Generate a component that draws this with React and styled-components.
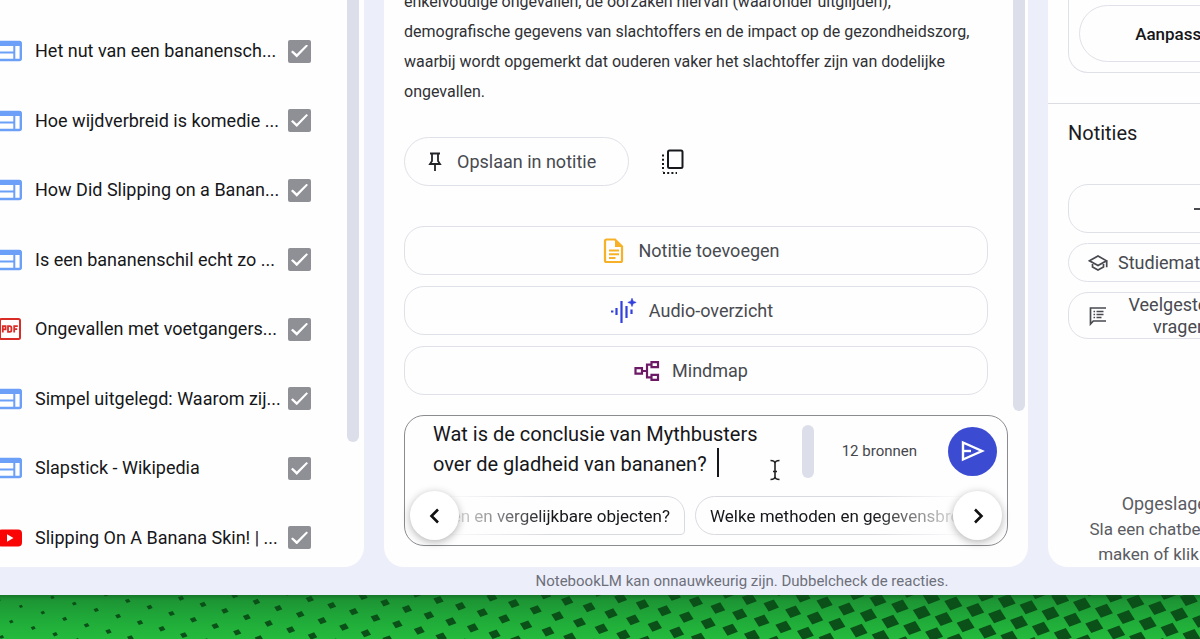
import React from "react";
import styled, { createGlobalStyle } from "styled-components";

const GlobalStyle = createGlobalStyle`
  *, *::before, *::after { box-sizing: border-box; }
  body { margin: 0; background: #1e9a35; font-family: Roboto, "Liberation Sans", sans-serif; color: #1b1c1f; }
  h2, p, ul { margin: 0; padding: 0; }
  button, textarea { font-family: inherit; }
`;

const Page = styled.div`
  min-height: 100vh;
  display: flex;
  flex-direction: column;
  overflow: hidden;
`;

/* The notebook window runs on past the right edge of the page. */
const NotebookWindow = styled.main`
  flex: 1;
  width: calc(100% + 284px);
  display: flex;
  flex-direction: column;
  background: #eceef9;
`;

const Panels = styled.div`
  flex: 1;
  display: grid;
  grid-template-columns: 364px minmax(0, 1fr) 436px;
  gap: 20px;
`;

const Panel = styled.section`
  display: flex;
  flex-direction: ${(p) => (p.$row ? "row" : "column")};
  min-width: 0;
  overflow: hidden;
  background: #fefefe;
  border-radius: 0 0 ${(p) => (p.$flushLeft ? "20px 0" : "20px 20px")};
`;

const ScrollThumb = styled.div`
  flex: none;
  width: 12px;
  height: ${(p) => p.$height};
  margin: 0 ${(p) => p.$inset} 0 0;
  background: #dcdfea;
  border-radius: ${(p) => (p.$round ? "6px" : "0 0 6px 6px")};
`;

/* ---------- sources ---------- */

const SourceList = styled.ul`
  flex: 1;
  display: flex;
  flex-direction: column;
  justify-content: space-between;
  list-style: none;
  padding: 39px 36px 17px 0;
`;

const SourceRow = styled.li`
  label {
    display: flex;
    align-items: center;
    height: 24px;
    font-size: 18px;
    line-height: 24px;
    white-space: nowrap;
    color: #16171a;
  }
  svg { flex: none; margin-left: -4px; }
`;

const SourceName = styled.span`
  flex: 1;
  padding-left: 9px;
`;

const Check = styled.input`
  appearance: none;
  flex: none;
  width: 23px;
  height: 23px;
  margin: 0;
  border-radius: 2px;
  display: grid;
  place-items: center;
  background: #8f9096;
  &::before {
    content: "";
    width: 17px;
    height: 13px;
    background: #fff;
    clip-path: polygon(0 57%, 10% 46%, 34% 74%, 91% 0, 100% 10%, 34% 100%);
  }
`;

/* ---------- chat ---------- */

const ChatScroll = styled.div`
  flex: 1;
  min-height: 0;
  display: flex;
  padding-left: 20px;
`;

const Thread = styled.div`
  flex: 1;
  height: 0;
  min-height: 100%;
  display: flex;
  flex-direction: column;
  justify-content: flex-end;
  padding: 0 25px 20px 0;
`;

const Answer = styled.p`
  font-size: 16px;
  line-height: 30px;
  color: #303135;
  margin-bottom: 30px;
  white-space: nowrap;
`;

const AnswerActions = styled.div`
  display: flex;
  align-items: center;
  gap: 26px;
  margin-bottom: 40px;
`;

const OutlineButton = styled.button`
  display: flex;
  align-items: center;
  justify-content: center;
  gap: ${(p) => p.$gap || "12px"};
  height: ${(p) => p.$height || "49px"};
  padding: 0 ${(p) => p.$pad || "20px"};
  flex: ${(p) => (p.$grow ? "1 1 0" : "none")};
  min-width: 0;
  border: 1px solid #e0e1e8;
  border-radius: ${(p) => p.$radius || "20px"};
  background: transparent;
  color: ${(p) => (p.$dark ? "#16171a" : "#484a50")};
  font-size: ${(p) => p.$size || "18px"};
  line-height: 22px;
  font-weight: ${(p) => (p.$dark ? 500 : 450)};
  white-space: nowrap;
  svg { flex: none; }
`;

const IconButton = styled.button`
  width: 36px;
  height: 36px;
  padding: 0;
  display: grid;
  place-items: center;
  border: 0;
  background: none;
`;

const Suggestions = styled.div`
  display: grid;
  gap: 11px;
`;

const Composer = styled.form`
  position: relative;
  margin: 0 20px 21px;
  border: 1px solid #8b8c90;
  border-radius: 20px;
`;

const ComposerTop = styled.div`
  display: flex;
  align-items: center;
  margin-bottom: 6px;
  padding: 0 10px 0 28px;
  height: 70px;
`;

const PromptWrap = styled.div`
  position: relative;
  flex: 1;
  align-self: stretch;
  padding-top: 3px;
`;

const Prompt = styled.textarea`
  display: block;
  width: 100%;
  height: 60px;
  padding: 0;
  border: 0;
  outline: 0;
  resize: none;
  overflow: hidden;
  background: transparent;
  color: #16171a;
  font-size: 20px;
  line-height: 30px;
`;

const Caret = styled.span`
  position: absolute;
  left: 284px;
  top: 32px;
  width: 2px;
  height: 29px;
  background: #16171a;
`;

const TextPointer = styled.svg`
  position: absolute;
  left: 336px;
  top: 43px;
`;

const SourceCount = styled.span`
  padding: 0 31px 0 28px;
  font-size: 15px;
  line-height: 20px;
  color: #45474c;
`;

const SendButton = styled.button`
  width: 49px;
  height: 49px;
  padding: 0;
  display: grid;
  place-items: center;
  border: 0;
  border-radius: 50%;
  background: #3b4bd2;
`;

const ChipRow = styled.div`
  display: flex;
  gap: 10px;
  padding: 4px 0 10px;
  margin: 0 5px;
  mask-image: linear-gradient(to right, transparent 30px, #000 140px, #000 calc(100% - 130px), transparent calc(100% - 35px));
`;

const ChipSlot = styled.div`
  display: flex;
  min-width: 0;
  overflow: hidden;
  ${(p) => (p.$end ? "width: 275px; justify-content: flex-end;" : "flex: 1;")}
`;

const Chip = styled.button`
  flex: none;
  height: 39px;
  padding: 0 14px;
  border: 1px solid #d9dae0;
  border-radius: ${(p) => (p.$tail ? "18px 18px 4px 18px" : "20px")};
  background: transparent;
  color: #16171a;
  font-size: 17px;
  line-height: 24px;
  white-space: nowrap;
`;

const RoundArrow = styled.button`
  position: absolute;
  bottom: 5px;
  ${(p) => p.$side}: 5px;
  width: 49px;
  height: 49px;
  padding: 0;
  display: grid;
  place-items: center;
  border: 0;
  border-radius: 50%;
  background: #fff;
  box-shadow: 0 2px 8px rgba(0, 0, 0, 0.3);
`;

const Disclaimer = styled.footer`
  height: 28px;
  font-size: 15px;
  line-height: 28px;
  text-align: center;
  color: #6d707b;
`;

/* ---------- studio ---------- */

const StudioCard = styled.div`
  display: flex;
  gap: 10px;
  margin: 0 20px 30px;
  padding: 5px 10px 10px;
  border: 1px solid #e0e1e8;
  border-top: 0;
  border-radius: 0 0 20px 20px;
`;

const NotesSection = styled.div`
  flex: 1;
  display: flex;
  flex-direction: column;
  gap: 10px;
  padding: 0 20px;
  border-top: 1px solid #dcdde3;
`;

const NotesTitle = styled.h2`
  padding: 14px 0 26px;
  font-size: 20px;
  line-height: 30px;
  font-weight: 400;
`;

const ButtonRow = styled.div`
  display: flex;
  gap: 10px;
`;

const ButtonText = styled.span`
  flex: ${(p) => (p.$grow ? 1 : "none")};
`;

const EmptyNote = styled.div`
  margin-top: auto;
  padding-left: 4px;
  text-align: center;
  white-space: nowrap;
  font-size: 17px;
  line-height: 25px;
  color: #5a5c62;
  strong { font-size: 18px; font-weight: 450; }
`;

/* ---------- backdrop ---------- */

const Backdrop = styled.div`
  height: 44px;
  background: linear-gradient(to bottom, #15772a 0, #1d9434 5px, #1fa638 20px, #24bb3d 44px);
  svg { display: block; }
`;

const cells = [];
for (let j = -34; j <= 14; j++) {
  for (let i = -24; i <= 44; i++) {
    const x = 407 + i * 21.9 - j * 9.6;
    const y = 14 + i * 6.3 + j * 15.3;
    if (x > -8 && x < 1210 && y > -8 && y < 52) cells.push([x, y]);
  }
}

function Pattern() {
  return (
    <svg width="1210" height="44" fill="#0b5018" aria-hidden="true">
      {cells.map(([x, y]) => {
        const s = Math.min(1, 0.2 + (x / 900) * 0.75 + y / 600);
        return (
          <path
            key={`${x},${y}`}
            transform={`translate(${x} ${y}) scale(${s})`}
            d="M-9 -2.500 L3 -7 L9 2.500 L-3 7Z"
          />
        );
      })}
    </svg>
  );
}

/* ---------- icons ---------- */

const WebIcon = () => (
  <svg width="30" height="24" viewBox="0 0 30 24" fill="none">
    <rect x="2" y="3" width="22.800" height="18" rx="1.500" stroke="#6b9ff8" strokeWidth="2.400" />
    <path d="M2 13.500h16M18.300 7v13" stroke="#6b9ff8" strokeWidth="2" />
    <path d="M2 4.500h23" stroke="#6b9ff8" strokeWidth="5" />
  </svg>
);

const PdfIcon = () => (
  <svg width="30" height="24" viewBox="0 0 30 24" fill="none" stroke="#da2c27">
    <rect x="4" y="2" width="20" height="20" rx="1.5" strokeWidth="2" />
    <path d="M6.8 15.5V9.2h2.8v3.2H6.8M12 9.2h1.8q1.6 0 1.6 1.6v2.5q0 1.6-1.6 1.6H12zM18.2 15.5V9.2h3.6M18.2 12.2h3" strokeWidth="1.8" />
  </svg>
);

const VideoIcon = () => (
  <svg width="30" height="24" viewBox="0 0 30 24">
    <rect x="2" y="3.5" width="24" height="17" rx="4" fill="#f90505" />
    <path d="M11 8.2v7.6l6.5-3.8z" fill="#fff" />
  </svg>
);

const PinIcon = () => (
  <svg width="20" height="24" viewBox="0 0 20 24" fill="none" stroke="#242529" strokeWidth="1.8">
    <path d="M5 3.5h10M7 3.5v7.5l-2 3h10l-2-3V3.5M10 14v7" />
  </svg>
);

const CopyIcon = () => (
  <svg width="24" height="26" viewBox="0 0 24 26" fill="none" stroke="#17181b">
    <rect x="7" y="1.5" width="14.5" height="17.5" rx="1.5" strokeWidth="2" />
    <path d="M2 5.500v17M2 24h14" strokeWidth="2" strokeDasharray="2 2.200" />
  </svg>
);

const NoteIcon = () => (
  <svg width="24" height="28" viewBox="0 0 24 28" fill="none" stroke="#f6b127">
    <path d="M4.500 2.500h8.500l7 7v14q0 1.500-1.500 1.500h-14Q3 25 3 23.500V4q0-1.500 1.500-1.500z" strokeWidth="2.200" />
    <path d="M13 2v8h8z" fill="#f6b127" stroke="none" />
    <path d="M7 13.500h10M7 17.300h10M7 21h6.500" strokeWidth="1.900" />
  </svg>
);

const AudioIcon = () => (
  <svg width="28" height="28" viewBox="0 0 28 28" fill="none" stroke="#3240dc">
    <path d="M2 14.500h2.400M7.500 11v7M12.500 4v22M17.500 9v12M22.500 12.500v4.500" strokeWidth="2.200" />
    <path d="M23 1.200l1.200 3 3 1.200-3 1.200-1.200 3-1.200-3-3-1.200 3-1.200z" fill="#3240dc" strokeWidth=".6" />
  </svg>
);

const MindmapIcon = () => (
  <svg width="26" height="24" viewBox="0 0 26 24" fill="none" stroke="#6d1a66" strokeWidth="2.200">
    <path d="M1.500 9.200h6.500v5.500H1.500zM17.500 3.200h6.500v5h-6.500zM17.500 15.800h6.500v5h-6.500zM8 12h5M17.500 5.700h-4.500v12.600h4.500" />
  </svg>
);

const SendIcon = () => (
  <svg width="28" height="28" viewBox="0 0 28 28" fill="none" stroke="#fff" strokeWidth="2.400">
    <path d="M4 5.500v17L23 14z" strokeLinejoin="miter" />
    <path d="M4 14h8" />
  </svg>
);

const Chevron = ({ left }) => (
  <svg width="20" height="20" viewBox="0 0 20 20" fill="none" stroke="#111" strokeWidth="2.600">
    <path d={left ? "M13 3.500L6.500 10l6.500 6.500" : "M7 3.500l6.500 6.500L7 16.500"} />
  </svg>
);

const PlusIcon = () => (
  <svg width="16" height="16" viewBox="0 0 16 16" stroke="#484a50" strokeWidth="2">
    <path d="M8 1v14M1 8h14" />
  </svg>
);

const CapIcon = () => (
  <svg width="20" height="20" viewBox="0 0 20 20" fill="none" stroke="#484a50" strokeWidth="1.700">
    <path d="M1.500 7.800L10 3l8.500 4.800L10 12.500zM4.500 9.800v4.200L10 17l5.500-3v-4.200M18.700 7.800v6.500" />
  </svg>
);

const FaqIcon = () => (
  <svg width="18" height="20" viewBox="0 0 18 20" fill="none" stroke="#484a50" strokeWidth="1.700">
    <path d="M17 2H1.500v16l2.800-3H17" />
    <path d="M4.500 5.500h1.600M4.500 8.500h1.600M4.500 11.500h1.600M7.500 5.500h7M7.500 8.500h7M7.500 11.500h5" />
  </svg>
);

const sources = [
  [WebIcon, "Het nut van een bananensch..."],
  [WebIcon, "Hoe wijdverbreid is komedie ..."],
  [WebIcon, "How Did Slipping on a Banan..."],
  [WebIcon, "Is een bananenschil echt zo ..."],
  [PdfIcon, "Ongevallen met voetgangers..."],
  [WebIcon, "Simpel uitgelegd: Waarom zij..."],
  [WebIcon, "Slapstick - Wikipedia"],
  [VideoIcon, "Slipping On A Banana Skin! | ..."],
];

function SourcesPanel() {
  return (
    <Panel $row $flushLeft aria-label="Bronnen">
      <SourceList>
        {sources.map(([Icon, name]) => (
          <SourceRow key={name}>
            <label>
              <Icon />
              <SourceName>{name}</SourceName>
              <Check type="checkbox" defaultChecked />
            </label>
          </SourceRow>
        ))}
      </SourceList>
      <ScrollThumb $height="78%" $inset="5px" />
    </Panel>
  );
}

function ChatPanel() {
  return (
    <Panel aria-label="Chat">
      <ChatScroll>
        <Thread>
          <Answer>
            enkelvoudige ongevallen, de oorzaken hiervan (waaronder uitglijden),<br />
            demografische gegevens van slachtoffers en de impact op de gezondheidszorg,<br />
            waarbij wordt opgemerkt dat ouderen vaker het slachtoffer zijn van dodelijke<br />
            ongevallen.
          </Answer>
          <AnswerActions>
            <OutlineButton $radius="25px" $pad="32px 0 20px">
              <PinIcon />
              Opslaan in notitie
            </OutlineButton>
            <IconButton aria-label="Kopiëren"><CopyIcon /></IconButton>
          </AnswerActions>
          <Suggestions>
            <OutlineButton $pad="30px 0 20px"><NoteIcon />Notitie toevoegen</OutlineButton>
            <OutlineButton $pad="30px 0 20px"><AudioIcon />Audio-overzicht</OutlineButton>
            <OutlineButton $pad="30px 0 20px"><MindmapIcon />Mindmap</OutlineButton>
          </Suggestions>
        </Thread>
        <ScrollThumb $height="calc(100% - 4px)" $inset="3px" />
      </ChatScroll>
      <Composer onSubmit={(e) => e.preventDefault()}>
        <ComposerTop>
          <PromptWrap>
            <Prompt
              aria-label="Vraag"
              defaultValue={"Wat is de conclusie van Mythbusters\nover de gladheid van bananen?"}
            />
            <Caret />
            <TextPointer width="12" height="22" viewBox="0 0 12 22" fill="none" stroke="#222" strokeWidth="1.600">
              <path d="M1.500 1.500Q6 1.500 6 4.500Q6 1.500 10.500 1.500M6 4v14M1.500 20.500Q6 20.500 6 17.500Q6 20.500 10.500 20.500M4 12.500h4" />
            </TextPointer>
          </PromptWrap>
          <ScrollThumb $height="53px" $inset="0px" $round />
          <SourceCount>12 bronnen</SourceCount>
          <SendButton aria-label="Versturen"><SendIcon /></SendButton>
        </ComposerTop>
        <ChipRow>
          <ChipSlot $end><Chip type="button" $tail>bananenschillen en vergelijkbare objecten?</Chip></ChipSlot>
          <ChipSlot><Chip type="button">Welke methoden en gegevensbronnen zijn er?</Chip></ChipSlot>
        </ChipRow>
        <RoundArrow type="button" $side="left" aria-label="Vorige"><Chevron left /></RoundArrow>
        <RoundArrow type="button" $side="right" aria-label="Volgende"><Chevron /></RoundArrow>
      </Composer>
    </Panel>
  );
}

function StudioPanel() {
  return (
    <Panel aria-label="Studio">
      <StudioCard>
        <OutlineButton $grow $dark $height="57px" $radius="29px" $size="17px" $pad="20px 0 30px">Aanpassen</OutlineButton>
        <OutlineButton $grow $dark $height="57px" $radius="29px" $size="17px">Genereren</OutlineButton>
      </StudioCard>
      <NotesSection>
        <NotesTitle>Notities</NotesTitle>
        <OutlineButton $gap="4px" $size="16px"><PlusIcon />Notitie toevoegen</OutlineButton>
        <ButtonRow>
          <OutlineButton $grow $height="39px" $gap="10px" $pad="14px 0 20px"><CapIcon />Studiemateriaal</OutlineButton>
          <OutlineButton $grow $height="39px">Briefing</OutlineButton>
        </ButtonRow>
        <ButtonRow>
          <OutlineButton $grow $height="47px" $pad="18px 0 20px">
            <FaqIcon />
            <ButtonText $grow>Veelgestelde<br />vragen</ButtonText>
          </OutlineButton>
          <OutlineButton $grow $height="47px">Tijdlijn</OutlineButton>
        </ButtonRow>
        <EmptyNote>
          <strong>Opgeslagen notities verschijnen hier.</strong><br />
          Sla een chatbericht op om een nieuwe notitie te<br />
          maken of klik hierboven op Notitie toevoegen
        </EmptyNote>
      </NotesSection>
    </Panel>
  );
}

export default function App() {
  return (
    <Page>
      <GlobalStyle />
      <NotebookWindow>
        <Panels>
          <SourcesPanel />
          <ChatPanel />
          <StudioPanel />
        </Panels>
        <Disclaimer>NotebookLM kan onnauwkeurig zijn. Dubbelcheck de reacties.</Disclaimer>
      </NotebookWindow>
      <Backdrop><Pattern /></Backdrop>
    </Page>
  );
}
